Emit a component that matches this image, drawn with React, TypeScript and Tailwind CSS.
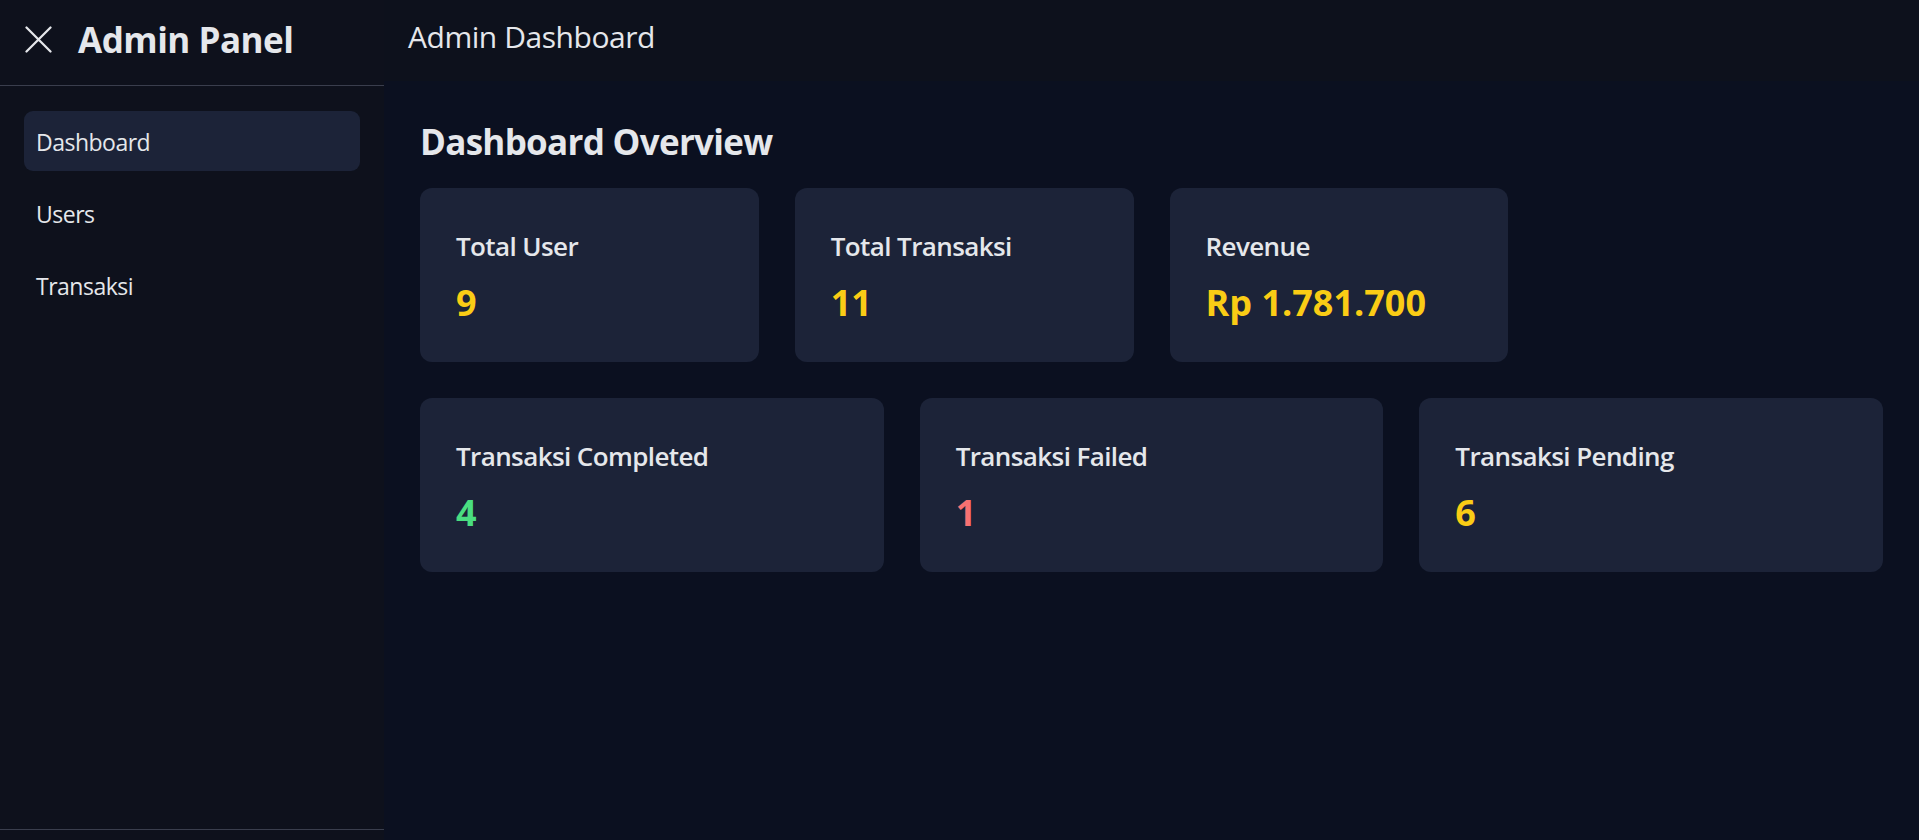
import React from 'react';

const topStats = [
  { label: 'Total User', value: '9', color: 'text-[#facc15]' },
  { label: 'Total Transaksi', value: '11', color: 'text-[#facc15]' },
  { label: 'Revenue', value: 'Rp 1.781.700', color: 'text-[#facc15]' },
];

const statusStats = [
  { label: 'Transaksi Completed', value: '4', color: 'text-[#4ade80]' },
  { label: 'Transaksi Failed', value: '1', color: 'text-[#f87171]' },
  { label: 'Transaksi Pending', value: '6', color: 'text-[#facc15]' },
];

const menu = ['Dashboard', 'Users', 'Transaksi'];

function StatCard({ label, value, color }: { label: string; value: string; color: string }) {
  return (
    <div className="bg-[#1c2338] rounded-[12px] px-[36px] pt-[37px] pb-[35px]">
      <p className="text-[26px] leading-[42px] font-semibold tracking-[-0.6px] text-[#e5e7eb]">{label}</p>
      <p className={`mt-[12px] text-[36px] leading-[48px] font-bold ${color}`}>{value}</p>
    </div>
  );
}

export default function App() {
  return (
    <div className="flex h-screen overflow-hidden bg-[#0b1020] text-[#e5e7eb] font-['Open_Sans','Noto_Sans',sans-serif]">
      {/* sidebar */}
      <aside className="w-[384px] shrink-0 h-screen flex flex-col bg-[#0e111c]">
        <div className="h-[86px] flex items-center gap-[26px] pl-[25px] pb-[6px] border-b border-[#3a3e4d]">
          <svg width="27" height="27" viewBox="0 0 27 27" fill="none" stroke="currentColor" strokeWidth="2.25" strokeLinecap="round">
            <path d="M1.5 1.5 25.5 25.5M25.5 1.5 1.5 25.5" />
          </svg>
          <h1 className="text-[35px] leading-[48px] font-bold tracking-[-0.5px]">Admin Panel</h1>
        </div>
        <nav className="flex-1 px-[24px] pt-[25px] pb-[24px] flex flex-col gap-[12px]">
          {menu.map((item, i) => (
            <a
              key={item}
              href="#"
              className={
                i === 0
                  ? 'block px-[12px] pt-[13px] pb-[11px] rounded-[9px] text-[23px] leading-[36px] tracking-[-0.5px] bg-[#1c2338]'
                  : 'block px-[12px] pt-[13px] pb-[11px] rounded-[9px] text-[23px] leading-[36px] tracking-[-0.5px]'
              }
            >
              {item}
            </a>
          ))}
        </nav>
        <div className="h-[11px] border-t border-[#3a3e4d]"></div>
      </aside>

      {/* main */}
      <div className="flex-1 flex flex-col">
        <header className="h-[81px] shrink-0 flex items-center px-[24px] pb-[8px] bg-[#0d111c]">
          <h2 className="text-[30px] leading-[42px] tracking-[-0.45px]">Admin Dashboard</h2>
        </header>
        <main className="flex-1 px-[36px] pt-[37px] pb-[36px]">
          <h3 className="text-[35px] leading-[48px] font-bold tracking-[-0.7px] mb-[22px]">Dashboard Overview</h3>
          <div className="grid grid-cols-4 gap-[36px]">
            {topStats.map((s) => (
              <StatCard key={s.label} {...s} />
            ))}
          </div>
          <div className="grid grid-cols-3 gap-[36px] mt-[36px]">
            {statusStats.map((s) => (
              <StatCard key={s.label} {...s} />
            ))}
          </div>
        </main>
      </div>
    </div>
  );
}
